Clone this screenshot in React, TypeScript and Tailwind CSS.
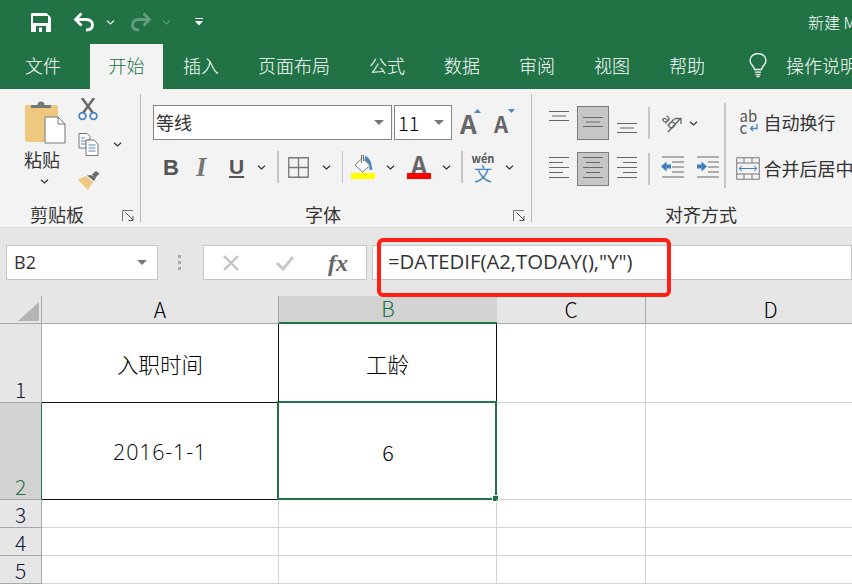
import React from "react";

const tabs = ["页面布局", "公式", "数据", "审阅", "视图", "帮助"];

const Chevron = ({ className = "" }: { className?: string }) => (
  <svg width="9" height="5" viewBox="0 0 9 5" className={`shrink-0 ${className}`}>
    <path d="M1 .7 4.5 4 8 .7" fill="none" stroke="#333" strokeWidth="1.2" />
  </svg>
);

const Caret = () => (
  <svg width="10" height="5" viewBox="0 0 10 5">
    <path d="M0 0h10L5 5z" fill="#777" />
  </svg>
);

const Sep = ({ className = "" }: { className?: string }) => (
  <div className={`w-[1.5px] shrink-0 bg-[#c6c6c6] ${className}`} />
);

const Launcher = () => (
  <svg width="13" height="12" viewBox="0 0 13 12" className="absolute right-[5px] top-[14px]">
    <path d="M.5 11V.5H11" fill="none" stroke="#777" />
    <path d="M3.5 2.5 11 10M11 6v4.5H6.5" fill="none" stroke="#555" />
  </svg>
);

// stacked horizontal lines for the alignment buttons
const Lines = ({ rows, top = 0 }: { rows: [number, number][]; top?: number }) => (
  <svg width="20" height="24" viewBox="0 0 20 24" style={{ marginTop: top }}>
    {rows.map(([x1, x2], i) => (
      <rect key={i} x={x1} width={x2 - x1} y={2 + i * (rows.length > 3 ? 5 : 4.5)} height="1" fill="#666" />
    ))}
  </svg>
);

const AlignBtn = ({ on, children }: { on?: boolean; children: React.ReactNode }) => (
  <div
    className={`flex h-[34px] w-[32px] shrink-0 items-center justify-center border-[1.5px] ${
      on ? "border-[#7d7d7d] bg-[#c6c6c6]" : "border-transparent"
    }`}
  >
    {children}
  </div>
);

const RowHead = ({ n, on }: { n: number; on?: boolean }) => (
  <div
    className={`flex items-end justify-center border-r-[1.5px] border-b border-b-[#a8a8a8] text-[21px] font-light leading-[26px] ${
      on ? "border-r-[#217346] bg-[#d2d2d2] text-[#217346]" : "border-r-[#a8a8a8] bg-[#e6e6e6] text-[#0f1a3a]"
    }`}
  >
    {n}
  </div>
);

const Cell = ({ className = "", children }: { className?: string; children?: React.ReactNode }) => (
  <div className={`relative flex items-center justify-center border-r border-b border-[#d4d4d4] pt-[2px] text-[21.5px] font-light text-black ${className}`}>
    {children}
  </div>
);

export default function App() {
  return (
    <div className="relative h-[584px] w-[852px] overflow-hidden bg-white font-['Noto_Sans_CJK_SC','Noto_Sans',sans-serif] text-[#333]">
      {/* Title bar */}
      <div className="flex h-[44px] items-center whitespace-nowrap bg-[#217346] pl-[31px] text-white [&>*]:shrink-0">
        <svg width="20" height="19" viewBox="0 0 20 19">
          <path fillRule="evenodd" d="M1 0h14.500L20 4.500V18a1 1 0 0 1-1 1H1a1 1 0 0 1-1-1V1a1 1 0 0 1 1-1ZM2 3v7h15V3ZM5 13v6h10v-6ZM8 14.500h3V19H8Z" fill="#fff" />
        </svg>
        <svg width="22" height="20" viewBox="0 0 22 20" className="ml-[22px]">
          <path d="M8.500 1.500 2.500 7.500l6 6M2.500 7.500h10.500c4.500 0 6.500 2.500 6.500 5.300 0 3-2.300 5.200-6.500 5.200" fill="none" stroke="#fff" strokeWidth="2.800" />
        </svg>
        <svg width="9" height="5" viewBox="0 0 9 5" className="ml-[11px]">
          <path d="M1 .7 4.500 4 8 .7" fill="none" stroke="#fff" strokeWidth="1.100" />
        </svg>
        <svg width="22" height="20" viewBox="0 0 22 20" className="ml-[15px] opacity-30">
          <path d="M13.500 1.500l6 6-6 6M19.500 7.500H9C4.500 7.500 2.500 10 2.500 12.800c0 3 2.300 5.200 6.500 5.200" fill="none" stroke="#fff" strokeWidth="2.800" />
        </svg>
        <svg width="9" height="5" viewBox="0 0 9 5" className="ml-[10px] opacity-30">
          <path d="M1 .7 4.500 4 8 .7" fill="none" stroke="#fff" strokeWidth="1.100" />
        </svg>
        <svg width="8" height="8" viewBox="0 0 8 8" className="ml-[24px]">
          <path d="M0 0h8v1H0zM0 3h8L4 7.500z" fill="#fff" />
        </svg>
        <span className="ml-[605px] font-light text-[16px]">新建 Microsoft Excel 工作表</span>
      </div>

      {/* Tabs */}
      <div className="flex h-[45px] items-center whitespace-nowrap bg-[#217346] text-[18px] font-light text-white [&>*]:shrink-0">
        <span className="ml-[25px] pb-[2px]">文件</span>
        <div className="ml-[29px] flex h-full w-[73px] items-center justify-center bg-[#f3f3f3] pb-[2px] text-[#217346]">开始</div>
        <span className="ml-[20px] pb-[2px]">插入</span>
        <div className="ml-[39px] flex gap-[39px] pb-[2px]">
          {tabs.map((t) => (
            <span key={t}>{t}</span>
          ))}
        </div>
        <svg width="18" height="25" viewBox="0 0 18 25" className="ml-[44px] mb-[2px]">
          <path d="M5.500 16.500C5 13 1 11.500 1 7.500a8 7 0 0 1 16 0c0 4-4 5.500-4.500 9z" fill="none" stroke="#fff" strokeWidth="1.300" />
          <path d="M6 18.500h6v1.200H6zM6.500 21h5v1.200h-5zM7.500 23h3v1.200h-3z" fill="#fff" />
        </svg>
        <span className="ml-[19px] pb-[2px]">操作说明搜索</span>
      </div>

      {/* Ribbon */}
      <div className="flex h-[139px] border-b border-b-[#dcdcdc] bg-[#f3f3f3] pt-[5px] pb-[5px]">
        {/* Clipboard */}
        <div className="flex w-[141px] shrink-0 flex-col border-r-[1.5px] border-r-[#b8b8b8]">
          <div className="flex flex-1">
            <div className="ml-[24px] flex w-[42px] flex-col items-center pt-[6px]">
              <svg width="42" height="44" viewBox="0 0 42 44">
                <rect x="1" y="5" width="33" height="37" rx="2" fill="#edc87e" />
                <path d="M7 8V5h6.500a3.500 3.500 0 0 1 7 0H27v3z" fill="#777" />
                <path d="M21 17h13l7 7v19H21z" fill="#fff" stroke="#777" />
                <path d="M34 17v7h7" fill="none" stroke="#777" />
              </svg>
              <span className="mt-[2px] -translate-x-[3px] whitespace-nowrap text-[18px] leading-[26px]">粘贴</span>
              <Chevron className="mt-[7px] -translate-x-[1px]" />
            </div>
            <div className="ml-[11px] flex flex-col pt-[4px]">
              <svg width="22" height="23" viewBox="0 0 22 23">
                <path d="M5 0l11 15M17 0 6 15" stroke="#666" strokeWidth="2.400" fill="none" />
                <circle cx="5.500" cy="18" r="3.400" fill="none" stroke="#4a86c0" strokeWidth="1.800" />
                <circle cx="16.500" cy="18" r="3.400" fill="none" stroke="#4a86c0" strokeWidth="1.800" />
              </svg>
              <div className="mt-[12px] flex items-center">
                <svg width="22" height="23" viewBox="0 0 22 23" className="ml-[1px]">
                  <path d="M1 .5h8l3 3V7H8v8H1z" fill="#fff" stroke="#777" />
                  <path d="M8 7h8l4 4v11.500H8z" fill="#fff" stroke="#777" />
                  <path d="M3 5h4M3 8h4M3 11h4M10.500 12h7M10.500 15h7M10.500 18h7" stroke="#4a86c0" />
                </svg>
                <Chevron className="ml-[13px]" />
              </div>
              <svg width="24" height="21" viewBox="0 0 24 21" className="mt-[14px]">
                <path d="M1 9.500 9 6l7 6-5 8C8 17 4 13 1 9.500z" fill="#edc87e" />
                <path d="M10 5.500l7 5.500 2-3-5-3zM15 4.500l4-3.500 3.500 2.800L18 8z" fill="#6a6a6a" />
              </svg>
            </div>
          </div>
          <div className="relative h-[26px] whitespace-nowrap pl-[30px] text-[18px] leading-[37px]">
            剪贴板
            <Launcher />
          </div>
        </div>

        {/* Font */}
        <div className="flex w-[391px] shrink-0 flex-col border-r-[1.5px] border-r-[#b8b8b8]">
          <div className="flex flex-1 flex-col pl-[12px] pt-[11px]">
            <div className="flex items-center">
              <div className="flex h-[35px] w-[239px] items-center justify-between border-[1.5px] border-[#858585] bg-white pl-[2px] pr-[7px] text-[18px] leading-[30px]">
                <span className="-mt-[2px]">等线</span>
                <Caret />
              </div>
              <div className="ml-[2px] flex h-[35px] w-[58px] items-center justify-between border-[1.5px] border-[#858585] bg-white pl-[3px] pr-[7px] text-[20px] font-light text-black">
                11
                <Caret />
              </div>
              <div className="relative ml-[8px] w-[22px] text-[26px] font-semibold leading-[30px] text-[#666]">
                A
                <svg width="7" height="4" viewBox="0 0 7 4" className="absolute left-[14px] top-[1px]">
                  <path d="M0 4h7L3.500 0z" fill="#4a86c0" />
                </svg>
              </div>
              <div className="relative ml-[12px] w-[20px] text-[22px] font-semibold leading-[30px] text-[#666]">
                A
                <svg width="7" height="4" viewBox="0 0 7 4" className="absolute left-[14px] top-[1px]">
                  <path d="M0 0h7L3.500 4z" fill="#4a86c0" />
                </svg>
              </div>
            </div>
            <div className="mt-[11px] flex h-[32px] items-center">
              <span className="ml-[10px] w-[33px] font-['Liberation_Sans',sans-serif] text-[22px] font-bold text-[#555]">B</span>
              <span className="w-[33px] font-['Liberation_Serif',serif] text-[27px] font-bold italic text-[#777]">I</span>
              <span className="w-[28px] font-['Liberation_Sans',sans-serif] text-[21px] font-bold leading-[22px] text-[#555] underline underline-offset-2">U</span>
              <Chevron />
              <Sep className="ml-[11px] h-[32px]" />
              <svg width="21" height="21" viewBox="0 0 21 21" className="ml-[9px] shrink-0">
                <path d="M.75.75h19.500v19.500H.75zM10.500.75v19.500M.75 10.500h19.500" fill="none" stroke="#777" strokeWidth="1.300" />
              </svg>
              <Chevron className="ml-[13px]" />
              <Sep className="ml-[11px] h-[32px]" />
              <div className="ml-[8px] flex w-[24px] flex-col">
                <svg width="24" height="18" viewBox="0 0 24 18">
                  <path d="M4 10 11.500 3l7.500 7.500-7.500 6.500z" fill="#fff" stroke="#777" />
                  <path d="M10.500 0v8M10 0h2.500v6" stroke="#777" fill="none" />
                  <path d="M14 1c4 1 6 5 6.500 9l1 5-3.500-.5 1-4-5-5.500z" fill="#4a86c0" />
                </svg>
                <div className="h-[6px] bg-[#ffff00]" />
              </div>
              <Chevron className="ml-[11px]" />
              <div className="ml-[12px] flex w-[24px] flex-col items-center">
                <span className="h-[18px] text-[25px] font-semibold leading-[18px] text-[#666]">A</span>
                <div className="h-[6px] w-full bg-[#ff0000]" />
              </div>
              <Chevron className="ml-[11px]" />
              <Sep className="ml-[10px] h-[32px]" />
              <div className="ml-[10px] flex w-[21px] flex-col items-center">
                <span className="h-[10px] text-[11px] font-semibold leading-[10px] text-[#555]">wén</span>
                <span className="mt-[1px] text-[18px] leading-[18px] text-[#4a86c0]">文</span>
              </div>
              <Chevron className="ml-[11px]" />
            </div>
          </div>
          <div className="relative h-[26px] pl-[164px] text-[18px] leading-[37px]">
            字体
            <Launcher />
          </div>
        </div>

        {/* Alignment */}
        <div className="flex min-w-0 flex-1 flex-col">
          <div className="flex flex-1 whitespace-nowrap">
            <div className="ml-[11px] flex w-[181px] shrink-0 flex-col gap-[12px] pt-[12px]">
              <div className="flex h-[34px] items-center gap-[2px]">
                <AlignBtn><Lines rows={[[0, 20], [3, 17], [0, 20]]} top={-4} /></AlignBtn>
                <AlignBtn on><Lines rows={[[0, 20], [3, 17], [0, 20]]} top={8} /></AlignBtn>
                <AlignBtn><Lines rows={[[0, 20], [3, 17], [0, 20]]} top={20} /></AlignBtn>
                <Sep className="ml-[3px] h-[32px]" />
                <div className="ml-[9px] flex items-center">
                  <svg width="22" height="20" viewBox="0 0 22 20">
                    <text x="1" y="10" fontSize="13" fontFamily="Noto Sans" fontWeight="500" fill="#666" transform="rotate(45 5 7)">ab</text>
                    <path d="M7 19 19 6M14 5.500H20V11" fill="none" stroke="#666" strokeWidth="1.300" />
                  </svg>
                  <Chevron className="ml-[6px]" />
                </div>
              </div>
              <div className="flex h-[34px] items-center gap-[2px]">
                <AlignBtn><Lines rows={[[0, 20], [0, 14], [0, 20], [0, 14], [0, 20]]} top={-4} /></AlignBtn>
                <AlignBtn on><Lines rows={[[0, 20], [3, 17], [0, 20], [3, 17], [0, 20]]} top={-4} /></AlignBtn>
                <AlignBtn><Lines rows={[[0, 20], [6, 20], [0, 20], [6, 20], [0, 20]]} top={-4} /></AlignBtn>
                <Sep className="ml-[3px] h-[32px]" />
                <svg width="23" height="22" viewBox="0 0 23 22" className="-mt-[4px] ml-[9px] shrink-0">
                  <path d="M0 10.500 5.500 5.500v3H10v4H5.500v3z" fill="#3f7fbf" />
                  <path d="M1 1h22M11 6h12M11 11h12M11 16h12M1 21h22" stroke="#666" />
                </svg>
                <svg width="23" height="22" viewBox="0 0 23 22" className="-mt-[4px] ml-[11px] shrink-0">
                  <path d="M10 10.500 4.500 5.500v3H0v4h4.500v3z" fill="#3f7fbf" />
                  <path d="M0 1h22M11 6h11M11 11h11M11 16h11M0 21h22" stroke="#666" />
                </svg>
              </div>
            </div>
            <Sep className="mt-[9px] h-[85px]" />
            <div className="flex flex-col pt-[13px]">
              <div className="flex h-[30px] items-center">
                <div className="ml-[14px] flex h-[24px] w-[21px] flex-col text-[15px] font-normal leading-[12px] text-[#555]">
                  <span>ab</span>
                  <span className="flex items-center">
                    c
                    <svg width="9" height="8" viewBox="0 0 9 8" className="ml-[2px]">
                      <path d="M8 0v4.500H2M4 2 1.500 4.500 4 7" fill="none" stroke="#4a86c0" strokeWidth="1.300" />
                    </svg>
                  </span>
                </div>
                <span className="ml-[3px] text-[18px]">自动换行</span>
              </div>
              <div className="mt-[16px] flex h-[30px] items-center">
                <svg width="24" height="23" viewBox="0 0 24 23" className="ml-[10px] shrink-0">
                  <path d="M.75.75h22.500v21.500H.75zM.75 6h22.500M.75 17h22.500M8 .75V6M16 .75V6M8 17v5M16 17v5" fill="none" stroke="#777" />
                  <path d="M3 11.500h18M6 9l-3 2.500L6 14M18 9l3 2.500-3 2.500" fill="none" stroke="#3f7fbf" />
                </svg>
                <span className="ml-[4px] text-[18px]">合并后居中</span>
              </div>
            </div>
          </div>
          <div className="h-[26px] whitespace-nowrap pl-[133px] text-[18px] leading-[37px]">对齐方式</div>
        </div>
      </div>

      {/* Formula bar */}
      <div className="flex h-[68px] items-start bg-[#e6e6e6] pt-[17px]">
        <div className="ml-[6px] flex h-[35px] w-[152px] items-center justify-between border border-[#c6c6c6] bg-white pl-[7px] pr-[10px] font-['Open_Sans',sans-serif] text-[18px] text-[#333]">
          B2
          <Caret />
        </div>
        <div className="ml-[20px] flex h-[35px] w-[3px] flex-col items-center justify-center gap-[3px]">
          <div className="size-[3px] bg-[#a8a8a8]" />
          <div className="size-[3px] bg-[#a8a8a8]" />
          <div className="size-[3px] bg-[#a8a8a8]" />
        </div>
        <div className="ml-[22px] flex h-[35px] w-[164px] items-center border border-[#c6c6c6] bg-white">
          <svg width="18" height="16" viewBox="0 0 18 16" className="ml-[18px]">
            <path d="M2 1l14 14M16 1 2 15" stroke="#c2c2c2" strokeWidth="2.400" />
          </svg>
          <svg width="20" height="16" viewBox="0 0 20 16" className="ml-[35px]">
            <path d="M2 8l6 6L18 2" fill="none" stroke="#c8c8c8" strokeWidth="3" />
          </svg>
          <span className="ml-[33px] font-['Liberation_Serif',serif] text-[24px] font-bold italic text-[#666]">fx</span>
        </div>
        <div className="ml-[5px] flex h-[35px] flex-1 items-center border border-[#c6c6c6] bg-white pb-[2px] pl-[15px] font-['Open_Sans',sans-serif] text-[20.3px] text-[#333]">
          =DATEDIF(A2,TODAY(),"Y")
        </div>
      </div>

      {/* Red annotation around the formula */}
      <div className="absolute left-[377px] top-[238px] h-[59px] w-[294px] rounded-[6px] border-[4px] border-[#ff2015]" />

      {/* Sheet grid */}
      <div className="grid w-[895px] grid-cols-[42px_237px_218px_149px_249px] grid-rows-[28px_79px_97px_28px_28px_28px] text-center">
        <div className="relative border-r-[1.5px] border-b border-[#a8a8a8] bg-[#e6e6e6]">
          <svg width="21" height="19" viewBox="0 0 21 19" className="absolute left-[18px] top-[6px]">
            <path d="M21 0v19H0z" fill="#b4b4b4" />
          </svg>
        </div>
        <div className="flex items-center justify-center border-r border-b border-[#a8a8a8] bg-[#e6e6e6] text-[21px] font-light text-black">A</div>
        <div className="flex items-center justify-center border-b-2 border-b-[#217346] bg-[#d2d2d2] text-[21px] font-light text-[#217346]">B</div>
        <div className="flex items-center justify-center border-r border-b border-[#a8a8a8] bg-[#e6e6e6] text-[21px] font-light text-black">C</div>
        <div className="flex items-center justify-center border-b border-[#a8a8a8] bg-[#e6e6e6] text-[21px] font-light text-black">D</div>

        <RowHead n={1} />
        <Cell className="border-r-[#111] border-b-[#111]">入职时间</Cell>
        <Cell className="border-r-[#111] border-b-[#111]">工龄</Cell>
        <Cell />
        <Cell />

        <RowHead n={2} on />
        <Cell className="border-r-[#111] border-b-[#111] font-['Open_Sans',sans-serif] tracking-[.8px]">2016-1-1</Cell>
        <Cell className="border-transparent">
          <span className="pl-[1px]">6</span>
          {/* selection box with its fill handle */}
          <div className="absolute -left-[2px] -top-[2px] -bottom-px -right-px border-2 border-[#217346]" />
          <div className="absolute -bottom-[3px] -right-[3px] size-[7px] border border-white bg-[#217346]" />
        </Cell>
        <Cell />
        <Cell />

        {[3, 4, 5].map((n) => (
          <React.Fragment key={n}>
            <RowHead n={n} />
            <Cell />
            <Cell />
            <Cell />
            <Cell />
          </React.Fragment>
        ))}
      </div>
    </div>
  );
}
